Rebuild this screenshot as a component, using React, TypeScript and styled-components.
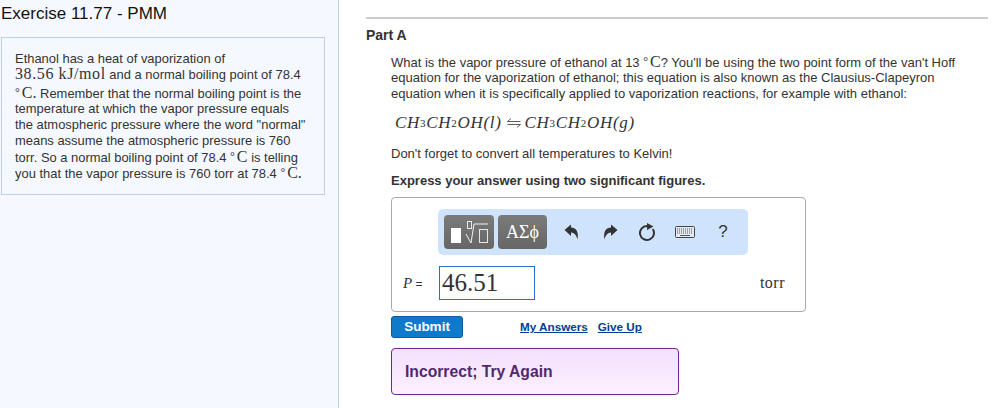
import styled, { createGlobalStyle } from "styled-components";

const GlobalStyle = createGlobalStyle`
  html, body {
    margin: 0;
    padding: 0;
    background: #fff;
  }
  body {
    font-family: "Liberation Sans", Arial, sans-serif;
    color: #333;
  }
`;

const Page = styled.div`
  display: flex;
  width: 998px;
  height: 408px;
  overflow: hidden;
`;

const Sidebar = styled.aside`
  box-sizing: border-box;
  width: 339px;
  height: 100%;
  padding: 4px 13px 0 1px;
  background: #f5f9ff;
  border-right: 1px solid #bcd0e6;
`;

const ExerciseTitle = styled.h1`
  margin: 0 0 14px;
  font-size: 17px;
  line-height: 19px;
  font-weight: 400;
  color: #111;
`;

const InfoBox = styled.div`
  box-sizing: border-box;
  width: 324px;
  height: 158px;
  padding: 13px 10px 0 13px;
  border: 1px solid #bcd0e6;
  font-size: 12.950px;
  white-space: nowrap;
`;

const InfoLine = styled.div<{ $shift?: number }>`
  height: 16px;
  line-height: 16px;
  margin-top: ${(props) => props.$shift ?? 0}px;
`;

const Math = styled.span<{ $spaced?: boolean }>`
  font-family: "Liberation Serif", "Times New Roman", serif;
  font-size: 16px;
  letter-spacing: ${(props) => (props.$spaced ? 0.6 : 0)}px;
  color: #333;
`;

const Deg = styled.span`
  font-family: "Liberation Serif", "Times New Roman", serif;
  font-size: 12px;
  line-height: 0;
  vertical-align: 2px;
  margin-right: 2px;
`;

const Main = styled.main`
  flex: 1;
  padding: 17px 10px 0 27px;
`;

const Rule = styled.hr`
  margin: 0 0 8px;
  border: 0;
  height: 2px;
  background: #ccc;
`;

const PartTitle = styled.h2`
  margin: 0 0 10px;
  font-size: 14px;
  line-height: 17px;
  font-weight: 700;
  color: #333;
`;

const Content = styled.div`
  padding-left: 25px;
  font-size: 13px;
  line-height: 16px;
`;

const Paragraph = styled.p<{ $bold?: boolean }>`
  margin: 0;
  height: 16px;
  white-space: nowrap;
  font-weight: ${(props) => (props.$bold ? 700 : 400)};
`;

const Equation = styled.div`
  display: flex;
  align-items: center;
  height: 20px;
  margin: 11px 0 13px 4px;
  font-family: "Liberation Serif", "Times New Roman", serif;
  font-size: 17px;
  font-style: italic;
  letter-spacing: 0.700px;
  color: #333;
  sub {
    font-size: 11px;
    font-style: normal;
    line-height: 0;
  }
`;

const Harpoons = styled.svg`
  margin: 0 4px 0 5px;
`;

const Instruction = styled.div`
  margin-top: 11px;
`;

const AnswerCard = styled.div`
  box-sizing: border-box;
  width: 415px;
  height: 115px;
  margin-top: 8px;
  padding: 11px 19px 0 11px;
  border: 1px solid #aaa;
  border-radius: 4px;
`;

const Toolbar = styled.div`
  box-sizing: border-box;
  display: flex;
  align-items: center;
  width: 310px;
  height: 46px;
  margin-left: 35px;
  padding: 0 6px;
  background: #cfe4fc;
  border-radius: 5px;
`;

const ToolButton = styled.div`
  box-sizing: border-box;
  display: flex;
  align-items: center;
  justify-content: center;
  width: 50px;
  height: 34px;
  margin-right: 4px;
  border-radius: 4px;
  background: linear-gradient(#7b7b7b, #666);
  color: #fff;
  font-family: "Liberation Serif", "Times New Roman", serif;
  font-size: 18px;
`;

const IconSlot = styled.div<{ $width: number }>`
  display: flex;
  align-items: center;
  justify-content: center;
  width: ${(props) => props.$width}px;
  height: 34px;
  color: #333;
  font-size: 17px;
`;

const AnswerRow = styled.div`
  display: flex;
  align-items: center;
  height: 34px;
  margin-top: 11px;
`;

const VarLabel = styled.span`
  width: 36px;
  font-family: "Liberation Serif", "Times New Roman", serif;
  font-size: 13px;
  white-space: nowrap;
  i {
    font-size: 15px;
  }
  span {
    font-family: "Liberation Sans", Arial, sans-serif;
    font-size: 12px;
  }
`;

const AnswerInput = styled.div`
  box-sizing: border-box;
  width: 96px;
  height: 34px;
  padding-left: 2px;
  border: 1px solid #2f6cc8;
  background: #fff;
  font-family: "Liberation Serif", "Times New Roman", serif;
  font-size: 25px;
  line-height: 32px;
  color: #333;
`;

const Unit = styled.span`
  margin: 0 1px 0 auto;
  font-family: "Liberation Serif", "Times New Roman", serif;
  font-size: 16px;
  letter-spacing: 0.500px;
`;

const Actions = styled.div`
  display: flex;
  align-items: center;
  height: 22px;
  margin-top: 4px;
`;

const SubmitButton = styled.button`
  box-sizing: border-box;
  width: 72px;
  height: 22px;
  padding: 0 0 2px;
  border: 1px solid #0b5c9e;
  border-radius: 3px;
  background: #0f7acb;
  color: #fff;
  font-family: inherit;
  font-size: 13.500px;
  font-weight: 700;
`;

const ActionLink = styled.a<{ $gap: number }>`
  margin-left: ${(props) => props.$gap}px;
  color: #003e94;
  font-size: 11.700px;
  font-weight: 700;
  text-decoration: underline;
`;

const Feedback = styled.div`
  box-sizing: border-box;
  display: flex;
  align-items: center;
  width: 288px;
  height: 47px;
  margin-top: 10px;
  padding: 1px 0 0 13px;
  border: 1px solid #6c2a8c;
  border-radius: 4px;
  background: linear-gradient(#f3e0fd, #fdf0ff);
  color: #51286f;
  font-size: 15.700px;
  font-weight: 700;
`;

function TemplatesIcon() {
  return (
    <svg width="50" height="34" viewBox="0 0 50 34">
      <rect x="7" y="13" width="10" height="15" fill="#fff" />
      <rect x="23.500" y="6.500" width="4" height="7" fill="none" stroke="#e8e8e8" />
      <path d="M22 19l5 9 3-19h14" fill="none" stroke="#f2f2f2" />
      <rect x="35.500" y="14.500" width="8" height="13" fill="none" stroke="#e8e8e8" />
    </svg>
  );
}

function UndoIcon({ flip }: { flip?: boolean }) {
  return (
    <svg width="15" height="16" viewBox="0 0 15 16" style={flip ? { transform: "scaleX(-1)" } : undefined}>
      <path d="M0.500 6L7 0.500v3C11.500 3.500 15 7 13.500 15.500 12.500 11.500 10.500 8.500 7 8.500v3.500z" fill="#333" />
    </svg>
  );
}

function ResetIcon() {
  return (
    <svg width="18" height="19" viewBox="0 0 18 19">
      <path d="M13.700 6A7 7 0 1 1 8 3" fill="none" stroke="#333" strokeWidth="2" />
      <path d="M8 0l6.500 3.500L8 7z" fill="#333" />
    </svg>
  );
}

function KeyboardIcon() {
  return (
    <svg width="20" height="12" viewBox="0 0 20 12">
      <rect x="0.500" y="0.500" width="19" height="11" rx="1" fill="#e4eaf2" stroke="#444" />
      <path d="M2 3h16M2 5h16M2 7h16" stroke="#555" strokeDasharray="1 1" />
      <path d="M5 9.500h10" stroke="#555" />
    </svg>
  );
}

function EquilibriumHarpoons() {
  return (
    <Harpoons width="14" height="10" viewBox="0 0 14 10">
      <path d="M13.500 3.500H0.500L4 0.500" fill="none" stroke="#333" strokeWidth="0.8" />
      <path d="M0.500 6.500H13.500L10 9.500" fill="none" stroke="#333" strokeWidth="0.8" />
    </Harpoons>
  );
}

export default function App() {
  return (
    <>
      <GlobalStyle />
      <Page>
        <Sidebar>
          <ExerciseTitle>Exercise 11.77 - PMM</ExerciseTitle>
          <InfoBox>
            <InfoLine>Ethanol has a heat of vaporization of</InfoLine>
            <InfoLine $shift={-1}>
              <Math $spaced>38.56 kJ/mol</Math> and a normal boiling point of 78.4
            </InfoLine>
            <InfoLine $shift={3}>
              <Deg>°</Deg>
              <Math>C.</Math> Remember that the normal boiling point is the
            </InfoLine>
            <InfoLine>temperature at which the vapor pressure equals</InfoLine>
            <InfoLine>the atmospheric pressure where the word "normal"</InfoLine>
            <InfoLine>means assume the atmospheric pressure is 760</InfoLine>
            <InfoLine>
              torr. So a normal boiling point of 78.4 <Deg>°</Deg>
              <Math>C</Math> is telling
            </InfoLine>
            <InfoLine>
              you that the vapor pressure is 760 torr at 78.4 <Deg>°</Deg>
              <Math>C.</Math>
            </InfoLine>
          </InfoBox>
        </Sidebar>
        <Main>
          <Rule />
          <PartTitle>Part A</PartTitle>
          <Content>
            <Paragraph>
              What is the vapor pressure of ethanol at 13 <Deg>°</Deg>
              <Math>C</Math>? You'll be using the two point form of the van't Hoff
            </Paragraph>
            <Paragraph>equation for the vaporization of ethanol; this equation is also known as the Clausius-Clapeyron</Paragraph>
            <Paragraph>equation when it is specifically applied to vaporization reactions, for example with ethanol:</Paragraph>
            <Equation>
              CH<sub>3</sub>CH<sub>2</sub>OH(l)
              <EquilibriumHarpoons />
              CH<sub>3</sub>CH<sub>2</sub>OH(g)
            </Equation>
            <Paragraph>Don't forget to convert all temperatures to Kelvin!</Paragraph>
            <Instruction>
              <Paragraph $bold>Express your answer using two significant figures.</Paragraph>
            </Instruction>
            <AnswerCard>
              <Toolbar>
                <ToolButton>
                  <TemplatesIcon />
                </ToolButton>
                <ToolButton>ΑΣϕ</ToolButton>
                <IconSlot $width={42}>
                  <UndoIcon />
                </IconSlot>
                <IconSlot $width={38}>
                  <UndoIcon flip />
                </IconSlot>
                <IconSlot $width={39}>
                  <ResetIcon />
                </IconSlot>
                <IconSlot $width={38}>
                  <KeyboardIcon />
                </IconSlot>
                <IconSlot $width={39}>?</IconSlot>
              </Toolbar>
              <AnswerRow>
                <VarLabel>
                  <i>P</i> <span>=</span>
                </VarLabel>
                <AnswerInput>46.51</AnswerInput>
                <Unit>torr</Unit>
              </AnswerRow>
            </AnswerCard>
            <Actions>
              <SubmitButton>Submit</SubmitButton>
              <ActionLink $gap={57}>My Answers</ActionLink>
              <ActionLink $gap={10}>Give Up</ActionLink>
            </Actions>
            <Feedback>Incorrect; Try Again</Feedback>
          </Content>
        </Main>
      </Page>
    </>
  );
}
